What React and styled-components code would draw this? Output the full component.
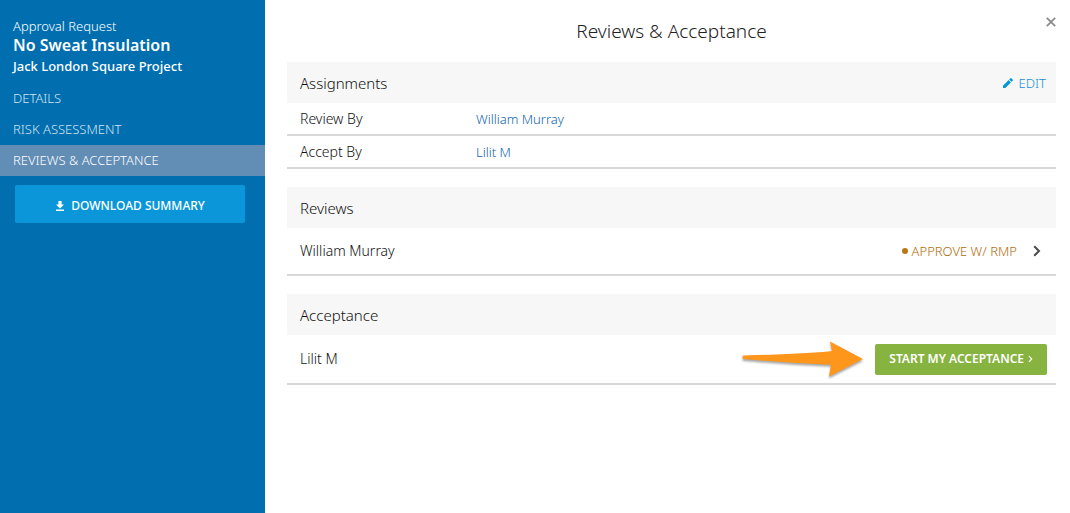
import styled, { createGlobalStyle } from 'styled-components'

const navItems = [
  { label: 'DETAILS', href: '#details' },
  { label: 'RISK ASSESSMENT', href: '#risk' },
  { label: 'REVIEWS & ACCEPTANCE', href: '#reviews', active: true },
]

const assignments = [
  { role: 'Review By', name: 'William Murray' },
  { role: 'Accept By', name: 'Lilit M' },
]

const DownloadIcon = () => (
  <svg width="10" height="12" viewBox="0 0 10 12" aria-hidden="true">
    <path d="M3.4 1h3.2v3.6H9L5 8.6 1 4.6h2.4zM1 9.6h8v1.3H1z" fill="currentColor" />
  </svg>
)

const PencilIcon = () => (
  <svg width="12" height="12" viewBox="0 0 12 12" aria-hidden="true">
    <path
      d="M1 8.7V11h2.300l5.600-5.600-2.300-2.300zM10.800 3.500c.25-.25.25-.6 0-.8L9.300 1.200c-.2-.25-.6-.25-.8 0L7.200 2.500l2.300 2.300z"
      fill="#0696d7"
    />
  </svg>
)

const CloseIcon = () => (
  <svg width="10" height="10" viewBox="0 0 10 10" aria-hidden="true">
    <path d="M.8.8l8.400 8.400M9.200.8L.8 9.200" stroke="#8c8c8c" strokeWidth="1.8" />
  </svg>
)

const ChevronIcon = () => (
  <svg width="8" height="12" viewBox="0 0 8 12" aria-hidden="true">
    <path d="M1.200 1.200L6 6l-4.800 4.800" fill="none" stroke="#4a4a4a" strokeWidth="2" />
  </svg>
)

const SmallChevronIcon = () => (
  <svg width="5" height="8" viewBox="0 0 5 8" aria-hidden="true">
    <path d="M1 1.200L3.700 4 1 6.800" fill="none" stroke="currentColor" strokeWidth="1.2" />
  </svg>
)

const App = () => {
  return (
    <>
      <GlobalStyle />
      <Layout>
        <Sidebar>
          <Summary>
            <p>Approval Request</p>
            <h1>No Sweat Insulation</h1>
            <h2>Jack London Square Project</h2>
          </Summary>
          <nav>
            {navItems.map((item) => (
              <NavLink
                key={item.href}
                href={item.href}
                $active={item.active}
                aria-current={item.active ? 'page' : undefined}
              >
                {item.label}
              </NavLink>
            ))}
          </nav>
          <DownloadButton type="button">
            <DownloadIcon />
            DOWNLOAD SUMMARY
          </DownloadButton>
        </Sidebar>

        <Main>
          <TitleBar>
            <h2>Reviews &amp; Acceptance</h2>
            <CloseButton type="button" aria-label="Close">
              <CloseIcon />
            </CloseButton>
          </TitleBar>

          <Section>
            <SectionHeader>
              <h3>Assignments</h3>
              <EditButton type="button">
                <PencilIcon />
                EDIT
              </EditButton>
            </SectionHeader>
            <AssignmentTable>
              <tbody>
                {assignments.map((item) => (
                  <tr key={item.role}>
                    <th scope="row">{item.role}</th>
                    <td>
                      <a href="#person">{item.name}</a>
                    </td>
                  </tr>
                ))}
              </tbody>
            </AssignmentTable>
          </Section>

          <Section>
            <SectionHeader>
              <h3>Reviews</h3>
            </SectionHeader>
            <PersonRow>
              <span>William Murray</span>
              <ReviewLink href="#review">
                <Status>APPROVE W/ RMP</Status>
                <ChevronIcon />
              </ReviewLink>
            </PersonRow>
          </Section>

          <Section>
            <SectionHeader>
              <h3>Acceptance</h3>
            </SectionHeader>
            <PersonRow>
              <span>Lilit M</span>
              <StartGroup>
                <Arrow width="124" height="40" viewBox="0 0 124 40" aria-hidden="true">
                  <path
                    d="M2 16.5Q1 18.5 2 20Q45 24 90 25.800L88 37.500L122 20L89 2.500L91 12Q65 15 2 16.500Z"
                    fill="#ff961c"
                  />
                </Arrow>
                <StartButton type="button">
                  START MY ACCEPTANCE
                  <SmallChevronIcon />
                </StartButton>
              </StartGroup>
            </PersonRow>
          </Section>
        </Main>
      </Layout>
    </>
  )
}

export default App

const GlobalStyle = createGlobalStyle`
  * {
    box-sizing: border-box;
  }
  body {
    margin: 0;
    background: #fff;
    color: #111;
    font-family: 'Noto Sans', 'Open Sans', sans-serif;
    font-size: 14px;
    font-weight: 300;
    line-height: 20px;
  }
  h1, h2, h3, p {
    margin: 0;
    font-weight: 300;
  }
  a {
    text-decoration: none;
  }
  button {
    display: flex;
    align-items: center;
    border: 0;
    padding: 0;
    background: none;
    font: inherit;
    cursor: pointer;
  }
`

const Layout = styled.div`
  display: flex;
  min-height: 100vh;
`

const Sidebar = styled.aside`
  flex: 0 0 265px;
  background: #006eaf;
  color: #fff;
`

const Summary = styled.header`
  padding: 16px 13px 6px;

  p {
    font-size: 13px;
  }
  h1 {
    font-size: 16px;
    font-weight: 600;
    line-height: 19px;
  }
  h2 {
    font-size: 13px;
    font-weight: 500;
    line-height: 22px;
  }
`

const NavLink = styled.a`
  display: block;
  padding: 0 13px;
  font-size: 13px;
  line-height: 31px;
  color: ${({ $active }) => ($active ? '#fff' : '#d3e3f0')};
  background: ${({ $active }) => ($active ? '#628db5' : 'transparent')};
`

const DownloadButton = styled.button`
  justify-content: center;
  gap: 6px;
  width: 230px;
  height: 38px;
  margin: 9px 15px;
  padding-top: 3px;
  border-radius: 2px;
  background: #0a96d8;
  color: #fff;
  font-size: 12px;
  font-weight: 500;
`

const Main = styled.main`
  flex: 1;
  min-width: 0;
  padding: 0 14px 20px 22px;
`

const TitleBar = styled.header`
  position: relative;
  padding: 15px 0;
  text-align: center;

  h2 {
    font-size: 19px;
    line-height: 32px;
    color: #222;
  }
`

const CloseButton = styled.button`
  position: absolute;
  top: 17px;
  right: 0;
`

const Section = styled.section`
  margin-bottom: 18px;
`

const SectionHeader = styled.header`
  display: flex;
  align-items: center;
  justify-content: space-between;
  height: 41px;
  padding: 0 10px 0 13px;
  background: #f7f7f7;

  h3 {
    font-size: 15px;
  }
`

const EditButton = styled.button`
  gap: 5px;
  color: #1a8fd4;
  font-size: 13px;
`

const AssignmentTable = styled.table`
  width: 100%;
  border-spacing: 0;

  th,
  td {
    height: 33px;
    padding: 0;
    border-bottom: 2px solid #d8d8d8;
    text-align: left;
    font-weight: 300;
  }
  th {
    width: 189px;
    padding-left: 13px;
  }
  a {
    color: #0f66b0;
    font-size: 13px;
  }
`

const PersonRow = styled.div`
  display: flex;
  align-items: center;
  justify-content: space-between;
  min-height: 48px;
  padding: 4px 9px 4px 13px;
  border-bottom: 2px solid #d8d8d8;
`

const ReviewLink = styled.a`
  display: flex;
  align-items: center;
  gap: 16px;
  padding-right: 6px;
`

const Status = styled.span`
  display: flex;
  align-items: center;
  gap: 4px;
  color: #b56a08;
  font-size: 13px;

  &::before {
    content: '';
    width: 6px;
    height: 6px;
    border-radius: 50%;
    background: #bb7515;
  }
`

const StartGroup = styled.div`
  display: flex;
  align-items: center;
  gap: 10px;
`

const Arrow = styled.svg`
  filter: drop-shadow(0 2px 1px rgba(0, 0, 0, 0.35));
`

const StartButton = styled.button`
  justify-content: center;
  gap: 4px;
  height: 31px;
  padding: 0 14px;
  border-radius: 2px;
  background: #87b340;
  color: #fff;
  font-size: 12px;
  font-weight: 600;
`
